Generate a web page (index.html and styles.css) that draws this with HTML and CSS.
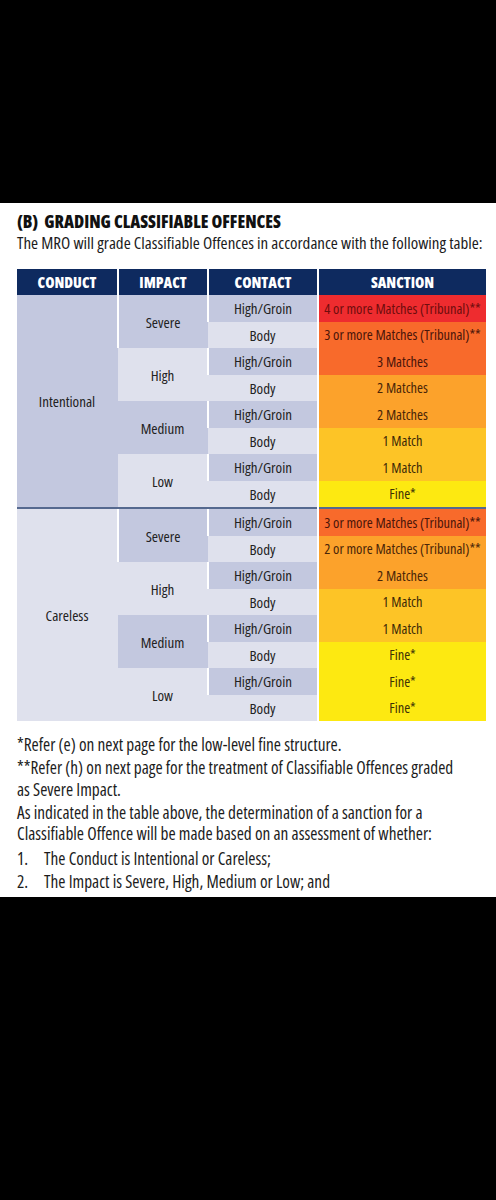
FILE: index.html
```html
<!DOCTYPE html>
<html lang="en">
<head>
    <meta charset="UTF-8">
    <meta name="viewport" content="width=device-width, initial-scale=1.0">
    <title>Grading Classifiable Offences</title>
    <link rel="stylesheet" href="styles.css">
</head>
<body>
    <div class="page">
        <h2 class="title">(B)&nbsp; GRADING CLASSIFIABLE OFFENCES</h2>
        <p class="intro">The MRO will grade Classifiable Offences in accordance with the following table:</p>

        <table class="grid">
            <thead>
                <tr>
                    <th class="c-conduct">CONDUCT</th>
                    <th class="c-impact">IMPACT</th>
                    <th class="c-contact">CONTACT</th>
                    <th>SANCTION</th>
                </tr>
            </thead>
            <tbody>
                <tr>
                    <td rowspan="8" class="dark">Intentional</td>
                    <td rowspan="2" class="dark">Severe</td>
                    <td class="dark">High/Groin</td>
                    <td class="s-red">4 or more Matches (Tribunal)**</td>
                </tr>
                <tr>
                    <td class="light">Body</td>
                    <td class="s-orange">3 or more Matches (Tribunal)**</td>
                </tr>
                <tr>
                    <td rowspan="2" class="light">High</td>
                    <td class="dark">High/Groin</td>
                    <td class="s-orange">3 Matches</td>
                </tr>
                <tr>
                    <td class="light">Body</td>
                    <td class="s-amber">2 Matches</td>
                </tr>
                <tr>
                    <td rowspan="2" class="dark">Medium</td>
                    <td class="dark">High/Groin</td>
                    <td class="s-amber">2 Matches</td>
                </tr>
                <tr>
                    <td class="light">Body</td>
                    <td class="s-gold">1 Match</td>
                </tr>
                <tr>
                    <td rowspan="2" class="light">Low</td>
                    <td class="dark">High/Groin</td>
                    <td class="s-gold">1 Match</td>
                </tr>
                <tr>
                    <td class="light">Body</td>
                    <td class="s-yellow">Fine*</td>
                </tr>

                <tr class="split">
                    <td rowspan="8" class="light">Careless</td>
                    <td rowspan="2" class="dark">Severe</td>
                    <td class="dark">High/Groin</td>
                    <td class="s-orange">3 or more Matches (Tribunal)**</td>
                </tr>
                <tr>
                    <td class="light">Body</td>
                    <td class="s-amber">2 or more Matches (Tribunal)**</td>
                </tr>
                <tr>
                    <td rowspan="2" class="light">High</td>
                    <td class="dark">High/Groin</td>
                    <td class="s-amber">2 Matches</td>
                </tr>
                <tr>
                    <td class="light">Body</td>
                    <td class="s-gold">1 Match</td>
                </tr>
                <tr>
                    <td rowspan="2" class="dark">Medium</td>
                    <td class="dark">High/Groin</td>
                    <td class="s-gold">1 Match</td>
                </tr>
                <tr>
                    <td class="light">Body</td>
                    <td class="s-yellow">Fine*</td>
                </tr>
                <tr>
                    <td rowspan="2" class="light">Low</td>
                    <td class="dark">High/Groin</td>
                    <td class="s-yellow">Fine*</td>
                </tr>
                <tr>
                    <td class="light">Body</td>
                    <td class="s-yellow">Fine*</td>
                </tr>
            </tbody>
        </table>

        <div class="notes">
            <p>*Refer (e) on next page for the low-level fine structure.</p>
            <p>**Refer (h) on next page for the treatment of Classifiable Offences graded as Severe Impact.</p>
            <p class="tight">As indicated in the table above, the determination of a sanction for a Classifiable Offence will be made based on an assessment of whether:</p>
            <ol class="steps">
                <li><span class="num">1.</span>The Conduct is Intentional or Careless;</li>
                <li><span class="num">2.</span>The Impact is Severe, High, Medium or Low; and</li>
            </ol>
        </div>
    </div>
</body>
</html>
```

FILE: styles.css
```css
body {
    margin: 0;
    background-color: #000;
    font-family: "Open Sans", "Liberation Sans", sans-serif;
    font-stretch: 75%;
    color: #1c1c1c;
}
.page {
    margin-top: 203px;
    height: 694px;
    background: #fff;
    padding: 8px 10px 0 17px;
    box-sizing: border-box;
}
.title {
    margin: 0;
    font-size: 17.4px;
    font-weight: 800;
    line-height: 21px;
    color: #111;
}
.intro {
    margin: 0;
    font-size: 17px;
    line-height: 21px;
}
.grid {
    margin-top: 16px;
    width: 469px;
    border-collapse: collapse;
    table-layout: fixed;
    font-size: 15px;
    text-align: center;
}
.grid th {
    height: 26px;
    padding: 0;
    background: #0e2a5f;
    color: #fff;
    font-size: 15px;
    font-weight: 800;
    border-left: 2px solid #fff;
}
.grid th:first-child {
    border-left: none;
}
.c-conduct { width: 100px; }
.c-impact { width: 88px; }
.c-contact { width: 108px; }
.grid td {
    height: 26.5px;
    padding: 0;
    border-left: 2px solid #fff;
    color: #222;
    font-weight: 500;
    white-space: nowrap;
}
.grid td:first-child {
    border-left: none;
}
.grid tr.split td {
    border-top: 2px solid #55698f;
}
.dark { background: #c3c8df; }
.light { background: #dfe1ed; }
.grid .s-red,
.grid .s-orange,
.grid .s-amber,
.grid .s-gold,
.grid .s-yellow {
    font-size: 14.4px;
}
.grid .s-red { background: #ee2c2f; color: #6e0d0d; }
.grid .s-orange { background: #f86a2b; color: #4a150a; }
.grid .s-amber { background: #fca22b; color: #4a2508; }
.grid .s-gold { background: #fdc426; color: #3e2a08; }
.grid .s-yellow { background: #fde911; color: #3e3206; }
.notes {
    margin-top: 13px;
    font-size: 17.3px;
    line-height: 22.6px;
    padding-right: 21px;
}
.notes p {
    margin: 0;
}
.notes .tight {
    line-height: 21.5px;
}
.steps {
    list-style: none;
    margin: 2px 0 0;
    padding: 0;
}
.steps li {
    line-height: 23px;
}
.num {
    display: inline-block;
    width: 27px;
}
```
